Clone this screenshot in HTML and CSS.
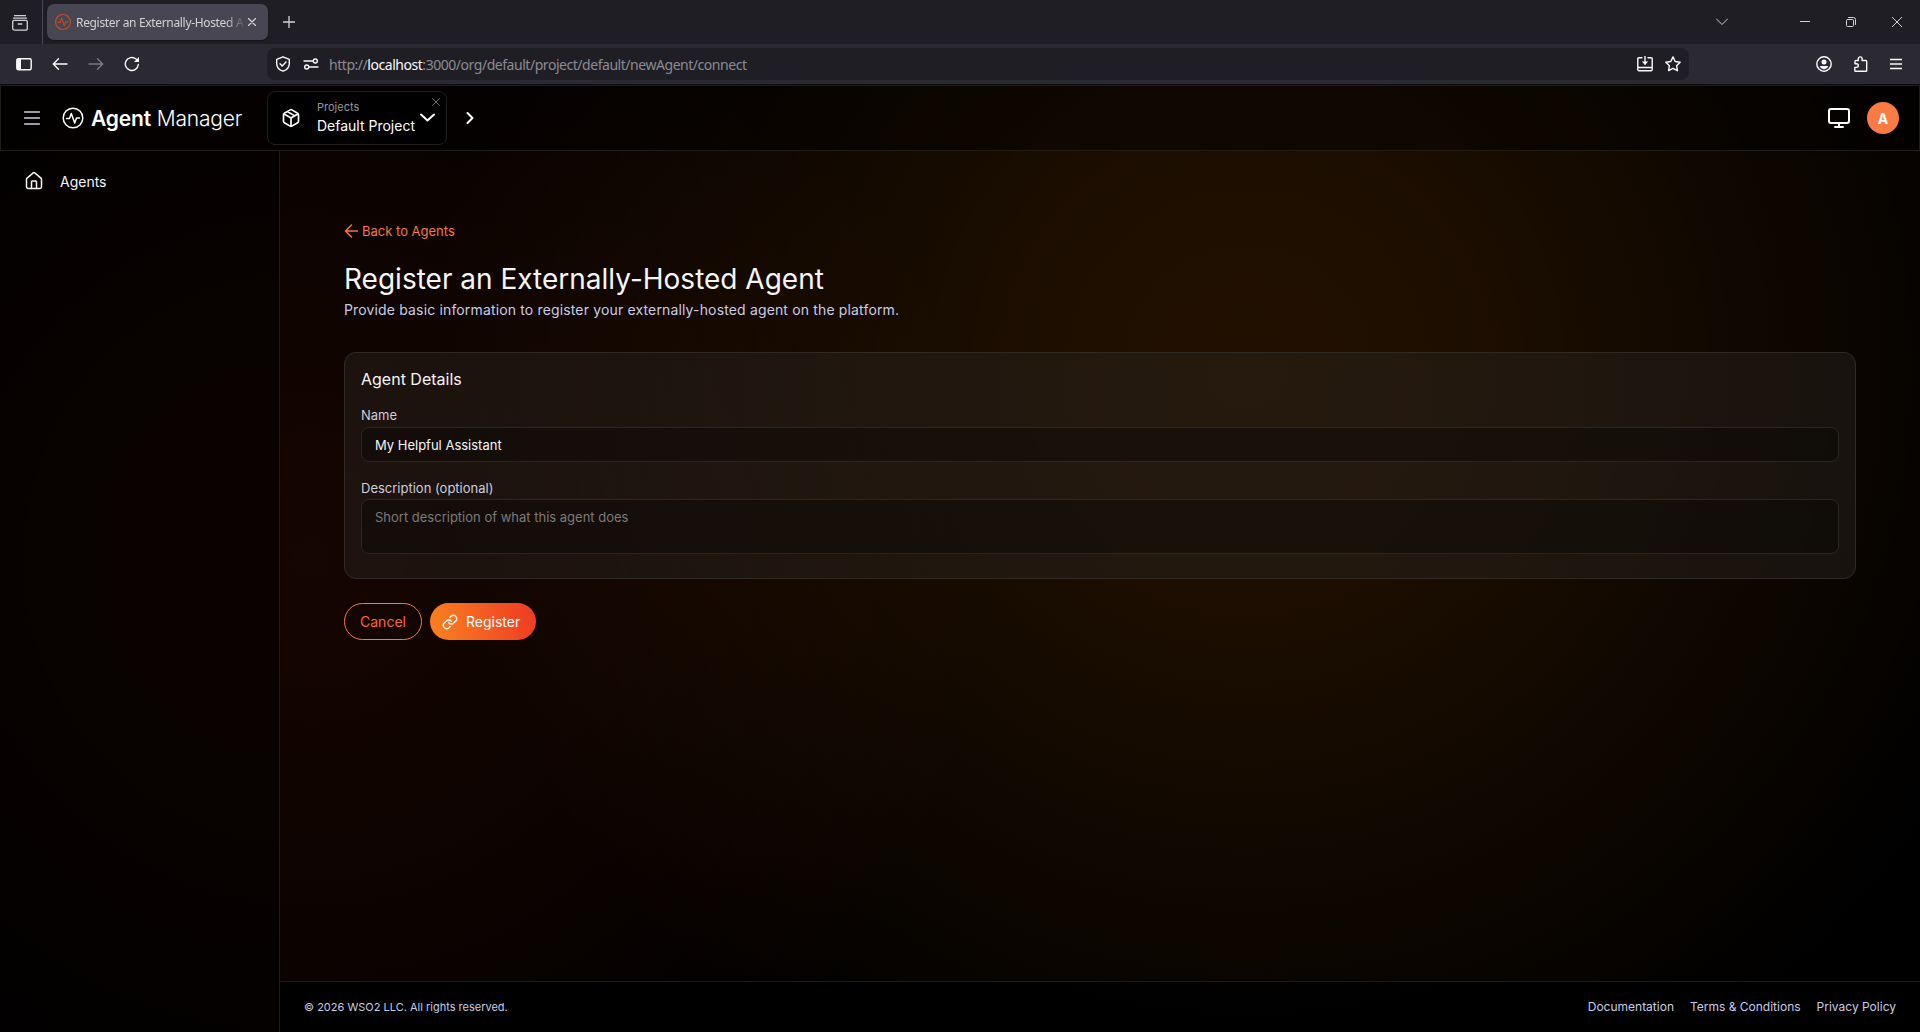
FILE: index.html
```html
<!DOCTYPE html>
<html lang="en">
<head>
    <meta charset="UTF-8">
    <title>Register an Externally-Hosted Agent</title>
    <link rel="stylesheet" href="styles.css">
</head>
<body>
    <div class="tabbar">
        <div class="tab-view">
            <svg width="16" height="16" viewBox="0 0 16 16"><path d="M2.5.7h11M1.5 3.2h13M2.2 5.3h11.6a1.5 1.5 0 0 1 1.5 1.5v6.4a2 2 0 0 1-2 2H2.7a2 2 0 0 1-2-2V6.8a1.5 1.5 0 0 1 1.5-1.5zM6.2 9h3.6"/></svg>
        </div>
        <div class="tab">
            <svg class="tab-icon" width="16" height="16" viewBox="0 0 20 20"><circle cx="10" cy="10" r="9.3"/><path d="M4 10.5h2.5l1.800-5 3.200 9 1.700-4.700H16"/></svg>
            <span class="tab-title">Register an Externally-Hosted A</span>
            <svg class="tab-close" width="8" height="8" viewBox="0 0 8 8"><path d="M.5.5l7 7M7.5.5l-7 7"/></svg>
        </div>
        <svg class="tab-new" width="12" height="12" viewBox="0 0 12 12"><path d="M6 0v12M0 6h12"/></svg>
        <div class="window-controls">
            <svg width="12" height="12" viewBox="0 0 12 12"><path d="M.5 3L6 8.500 11.500 3"/></svg>
            <svg width="10" height="10" viewBox="0 0 10 10"><path d="M0 4.500h10"/></svg>
            <svg width="10" height="10" viewBox="0 0 10 10"><path d="M1.500 2.500h5a1 1 0 0 1 1 1v5a1 1 0 0 1-1 1h-5a1 1 0 0 1-1-1v-5a1 1 0 0 1 1-1zM2.500.5h5a2 2 0 0 1 2 2v5"/></svg>
            <svg width="10" height="10" viewBox="0 0 10 10"><path d="M0 0l10 10M10 0L0 10"/></svg>
        </div>
    </div>

    <div class="toolbar">
        <div class="nav-buttons">
            <svg width="16" height="16" viewBox="0 0 16 16"><rect x=".8" y="2.8" width="14.4" height="10.9" rx="1.5"/><path class="solid" d="M1 3h4v10.500H1z"/></svg>
            <svg width="16" height="16" viewBox="0 0 16 16"><path d="M15 8H1.500M6.500 2.800L1.300 8l5.200 5.200"/></svg>
            <svg class="disabled" width="16" height="16" viewBox="0 0 16 16"><path d="M1 8h13.500M9.500 2.800L14.700 8l-5.200 5.200"/></svg>
            <svg width="16" height="16" viewBox="0 0 16 16"><path d="M14.300 8.500A6.500 6.500 0 1 1 12 3l1.500 1.500"/><path class="solid" d="M15 1v5h-5z"/></svg>
        </div>
        <div class="urlbar">
            <svg width="16" height="16" viewBox="0 0 16 16"><path d="M8 .8l6.300 2.500v4.200c0 3.800-2.500 6.500-6.300 7.700C4.200 14 1.700 11.300 1.700 7.500V3.300zM5 7.700l2.200 2.200L11 6"/></svg>
            <svg class="permissions" width="16" height="16" viewBox="0 0 16 16"><path d="M1 5h8.500M6.500 11H15"/><circle cx="12.3" cy="5" r="2"/><circle cx="3.7" cy="11" r="2"/></svg>
            <span class="url">http://<b>localhost</b>:3000/org/default/project/default/newAgent/connect</span>
            <svg class="save" width="16" height="16" viewBox="0 0 16 16"><path d="M5 1.700H2A1.200 1.200 0 0 0 .8 3v10.500A1.200 1.200 0 0 0 2 14.700h12a1.200 1.200 0 0 0 1.200-1.200V3A1.200 1.200 0 0 0 14 1.700h-3M8 0v8M.8 11.500h14.400"/><path class="solid" d="M4.800 5.500h6.400L8 9z"/></svg>
            <svg width="16" height="16" viewBox="0 0 16 16"><path d="M8 .9l2.200 4.600 5 .7-3.600 3.500.8 5L8 12.300l-4.400 2.400.8-5L.8 6.200l5-.7z"/></svg>
        </div>
        <div class="toolbar-end">
            <svg width="16" height="16" viewBox="0 0 16 16"><circle cx="8" cy="8" r="7.2"/><circle class="solid" cx="8" cy="6" r="2.5"/><path class="solid" d="M3.800 10h8.400c-.5 2-2 3.200-4.200 3.200S4.300 12 3.800 10z"/></svg>
            <svg width="16" height="16" viewBox="0 0 16 16"><path d="M2 7.300V5.300a.8.8 0 0 1 .8-.8h2.500V2.800a1.900 1.900 0 0 1 3.800 0v1.700h3.600a1 1 0 0 1 1 1v8.900a.8.8 0 0 1-.8.8H2.600a.8.8 0 0 1-.8-.8v-3h1.700a1.800 1.800 0 0 0 0-3.600H2z"/></svg>
            <svg width="12" height="16" viewBox="0 0 12 16"><path d="M0 3.500h12M0 8h12M0 12.500h12"/></svg>
        </div>
    </div>

    <div class="app">
        <header class="header">
            <svg class="menu" width="16" height="16" viewBox="0 0 16 16"><path d="M.5 2h15M.5 8h15M.5 14h15"/></svg>
            <svg class="logo-icon" width="22" height="22" viewBox="0 0 22 22"><circle cx="11" cy="11" r="9.8"/><path d="M4.500 11.500h3l1.800-5 3.400 9.500 1.800-5h3"/></svg>
            <div class="logo"><b>Agent</b> Manager</div>
            <div class="project">
                <svg class="package" width="20" height="20" viewBox="0 0 24 24"><path d="M11 21.730a2 2 0 0 0 2 0l7-4A2 2 0 0 0 21 16V8a2 2 0 0 0-1-1.730l-7-4a2 2 0 0 0-2 0l-7 4A2 2 0 0 0 3 8v8a2 2 0 0 0 1 1.730zM12 22V12M3.300 7L12 12l8.700-5M7.500 4.270l9 5.150"/></svg>
                <div class="project-text">
                    <span class="project-label">Projects</span>
                    <span class="project-name">Default Project</span>
                </div>
                <svg class="project-arrow" width="16" height="16" viewBox="0 0 16 16"><path d="M2 4.500l6.500 6L15 4.500"/></svg>
                <svg class="project-close" width="8" height="8" viewBox="0 0 8 8"><path d="M.5.5l7 7M7.5.5l-7 7"/></svg>
            </div>
            <svg class="next" width="8" height="14" viewBox="0 0 8 14"><path d="M1.500 2l5 5-5 5"/></svg>
            <svg class="monitor" width="24" height="24" viewBox="0 0 24 24"><rect x="2" y="3" width="20" height="14" rx="2"/><path d="M8 21h8M12 17v4"/></svg>
            <div class="avatar">A</div>
        </header>

        <div class="main">
            <nav class="sidebar">
                <a class="nav-item">
                    <svg width="20" height="20" viewBox="0 0 24 24"><path d="M15 21v-8a1 1 0 0 0-1-1h-4a1 1 0 0 0-1 1v8"/><path d="M3 10a2 2 0 0 1 .709-1.528l7-6a2 2 0 0 1 2.582 0l7 6A2 2 0 0 1 21 10v9a2 2 0 0 1-2 2H5a2 2 0 0 1-2-2z"/></svg>
                    <span>Agents</span>
                </a>
            </nav>
            <div class="page">
                <div class="content">
                    <a class="back">
                        <svg width="14" height="14" viewBox="0 0 14 14"><path d="M13.500 7H1.500M7.500 1l-6 6 6 6"/></svg>
                        <span>Back to Agents</span>
                    </a>
                    <h1>Register an Externally-Hosted Agent</h1>
                    <p class="subtitle">Provide basic information to register your externally-hosted agent on the platform.</p>

                    <div class="card">
                        <h2>Agent Details</h2>
                        <label for="name">Name</label>
                        <input type="text" id="name" value="My Helpful Assistant">
                        <label for="description">Description (optional)</label>
                        <textarea id="description" placeholder="Short description of what this agent does"></textarea>
                    </div>

                    <div class="actions">
                        <button class="cancel">Cancel</button>
                        <button class="register">
                            <svg width="16" height="16" viewBox="0 0 24 24"><path d="M10 13a5 5 0 0 0 7.540.540l3-3a5 5 0 0 0-7.070-7.070l-1.720 1.710"/><path d="M14 11a5 5 0 0 0-7.540-.540l-3 3a5 5 0 0 0 7.070 7.070l1.710-1.710"/></svg>
                            <span>Register</span>
                        </button>
                    </div>
                </div>
                <footer class="footer">
                    <span class="copyright">© 2026 WSO2 LLC. All rights reserved.</span>
                    <div class="links">
                        <a>Documentation</a>
                        <a>Terms &amp; Conditions</a>
                        <a>Privacy Policy</a>
                    </div>
                </footer>
            </div>
        </div>
    </div>
</body>
</html>
```

FILE: styles.css
```css
* {
    box-sizing: border-box;
}
body {
    margin: 0;
    height: 1032px;
    overflow: hidden;
    display: flex;
    flex-direction: column;
    background: #000;
    color: #f5f5f5;
    font-family: Inter, sans-serif;
}
svg {
    flex: none;
    fill: none;
    stroke: currentColor;
    stroke-width: 2;
    stroke-linecap: round;
    stroke-linejoin: round;
}
.solid {
    fill: currentColor;
    stroke: none;
}

/* browser tabs */
.tabbar {
    height: 44px;
    display: flex;
    align-items: center;
    background: #1f1e25;
    color: #d2d2d5;
    font-family: "Noto Sans", sans-serif;
}
.tabbar svg {
    stroke-width: 1.3;
}
.tab-view {
    width: 43px;
    height: 44px;
    padding: 14px 12px;
    border-right: 1px solid #4a4952;
}
.tab {
    width: 221px;
    height: 36px;
    margin-left: 4px;
    padding: 0 12px 0 8px;
    display: flex;
    align-items: center;
    border-radius: 7px;
    background: #484652;
    box-shadow: 0 1px 2px rgba(0,0,0,0.4);
}
.tab .tab-icon {
    color: #c24f26;
    stroke-width: 1.4;
}
.tab-title {
    width: 170px;
    margin: 0 2px 0 5px;
    white-space: nowrap;
    font-size: 12px;
    letter-spacing: -0.33px;
    mask-image: linear-gradient(to left, transparent, #000 20px);
}
.tab-new {
    margin-left: 15px;
}
.window-controls {
    margin-left: auto;
    margin-right: 18px;
    display: flex;
    align-items: center;
    gap: 36px;
}
.window-controls svg:first-child {
    margin-right: 36px;
}
.window-controls svg {
    stroke-width: 1;
}

/* browser toolbar */
.toolbar {
    height: 41px;
    padding-left: 16px;
    display: flex;
    align-items: center;
    background: #2b2a33;
    border-bottom: 1px solid #0c0c0e;
    color: #fbfbfe;
}
.toolbar svg {
    stroke-width: 1.4;
}
.nav-buttons {
    width: 251px;
    display: flex;
    gap: 20px;
}
.nav-buttons .disabled {
    color: #7b7a82;
}
.urlbar {
    width: 1422px;
    height: 32px;
    padding: 0 8px;
    display: flex;
    align-items: center;
    border-radius: 8px;
    background: #1f1e25;
}
.permissions {
    margin-left: 12px;
}
.url {
    margin-left: 10px;
    padding-top: 1px;
    color: #8c8b92;
    font-family: "Noto Sans", sans-serif;
    font-size: 14px;
    letter-spacing: -0.46px;
}
.url b {
    color: #fbfbfe;
    font-weight: normal;
}
.save {
    margin-left: auto;
    margin-right: 12px;
}
.toolbar-end {
    margin-left: auto;
    margin-right: 18px;
    display: flex;
    align-items: center;
    gap: 21px;
}

/* application */
.app {
    flex: 1;
    display: flex;
    flex-direction: column;
    background:
        radial-gradient(circle 820px at 1248px 284px, rgba(255,125,0,0.135), rgba(255,125,0,0.11) 30%, rgba(255,125,0,0.055) 65%, transparent),
        radial-gradient(circle 680px at 310px 474px, rgba(255,60,0,0.085), rgba(255,70,0,0.055) 45%, transparent),
        #000;
}
.header {
    height: 66px;
    padding: 0 20px 0 24px;
    display: flex;
    align-items: center;
    border: 1px solid #1f1c1a;
    background: rgba(0,0,0,0.4);
    color: #fff;
}
.menu {
    margin-left: -1px;
    color: #ced0e0;
    stroke-width: 1.5;
}
.logo-icon {
    margin-left: 22px;
    stroke-width: 1.5;
}
.logo {
    width: 176px;
    margin-left: 7px;
    font-size: 21px;
    font-weight: 300;
    letter-spacing: -0.17px;
    white-space: nowrap;
}
.logo b {
    font-weight: 600;
}
.project {
    position: relative;
    width: 180px;
    height: 54px;
    display: flex;
    align-items: center;
    padding-left: 13px;
    border: 1px solid #211f1e;
    border-radius: 8px;
    background: #000;
}
.project-text {
    width: 102px;
    margin: 0 0 2px 16px;
    display: flex;
    flex-direction: column;
    white-space: nowrap;
}
.project-label {
    font-size: 11px;
    line-height: 18px;
    color: #97979b;
}
.project-name {
    font-size: 14px;
    line-height: 20px;
}
.project-close {
    position: absolute;
    top: 6px;
    right: 6px;
    color: #8a8a8a;
    stroke-width: 0.8;
}
.next {
    margin-left: 19px;
}
.monitor {
    margin-left: auto;
    margin-right: 16px;
}
.avatar {
    width: 32px;
    height: 32px;
    border-radius: 50%;
    background: #fc7b45;
    font-size: 14px;
    font-weight: 700;
    line-height: 33px;
    text-align: center;
}
.main {
    flex: 1;
    display: flex;
}
.sidebar {
    width: 280px;
    padding: 20px 24px;
    border-right: 1px solid #1f1b19;
    background: rgba(0,0,0,0.45);
}
.nav-item {
    display: flex;
    align-items: center;
    gap: 16px;
    font-size: 14px;
    line-height: 22px;
}
.nav-item svg {
    margin-bottom: 2px;
    stroke-width: 1.8;
}
.page {
    flex: 1;
    display: flex;
    flex-direction: column;
}
.content {
    flex: 1;
    padding: 70px 64px 0;
}
.back {
    display: flex;
    align-items: center;
    gap: 4px;
    color: #f87643;
    font-size: 13px;
    line-height: 20px;
}
.back svg {
    stroke-width: 1.5;
}
h1 {
    margin: 20px 0 0;
    font-size: 28px;
    font-weight: 400;
    line-height: 36px;
}
.subtitle {
    margin: 3px 0 0;
    color: #c9cce6;
    font-size: 14px;
    letter-spacing: 0.15px;
    line-height: 20px;
}
.card {
    height: 227px;
    margin-top: 32px;
    padding: 15px 16px;
    display: flex;
    flex-direction: column;
    border: 1px solid #302a25;
    border-radius: 12px;
    background: rgba(44,40,36,0.4);
}
h2 {
    margin: 0 0 15px;
    font-size: 16px;
    font-weight: 400;
    line-height: 22px;
}
label {
    margin-bottom: 2px;
    color: #cdcddd;
    font-size: 13px;
    line-height: 20px;
}
input, textarea {
    display: block;
    width: 100%;
    padding: 0 13px;
    border: 1px solid #2a2624;
    border-radius: 8px;
    outline: none;
    background: rgba(0,0,0,0.3);
    color: #f5f5f5;
    font-family: inherit;
    font-size: 13px;
}
input {
    height: 35px;
    margin-bottom: 16px;
}
textarea {
    height: 55px;
    margin-top: -1px;
    padding-top: 9px;
    resize: none;
}
textarea::placeholder {
    color: #7d7a79;
}
.actions {
    margin-top: 24px;
    display: flex;
    gap: 8px;
}
button {
    height: 37px;
    border: none;
    border-radius: 19px;
    color: #fff;
    font-family: inherit;
    font-size: 14px;
}
.cancel {
    width: 78px;
    border: 1px solid #f87643;
    background: transparent;
    color: #f8692f;
}
.register {
    width: 106px;
    padding: 0 0 0 12px;
    display: flex;
    align-items: center;
    gap: 8px;
    background: linear-gradient(77deg, #f87c1f 10%, #f04023 90%);
}
.footer {
    height: 51px;
    padding: 0 24px;
    display: flex;
    align-items: center;
    justify-content: space-between;
    border-top: 1px solid #1c1a19;
    background: rgba(0,0,0,0.8);
    color: #c9cce6;
}
.copyright {
    font-size: 11px;
}
.links {
    margin-bottom: 2px;
    display: flex;
    gap: 16px;
    font-size: 12px;
}
```
